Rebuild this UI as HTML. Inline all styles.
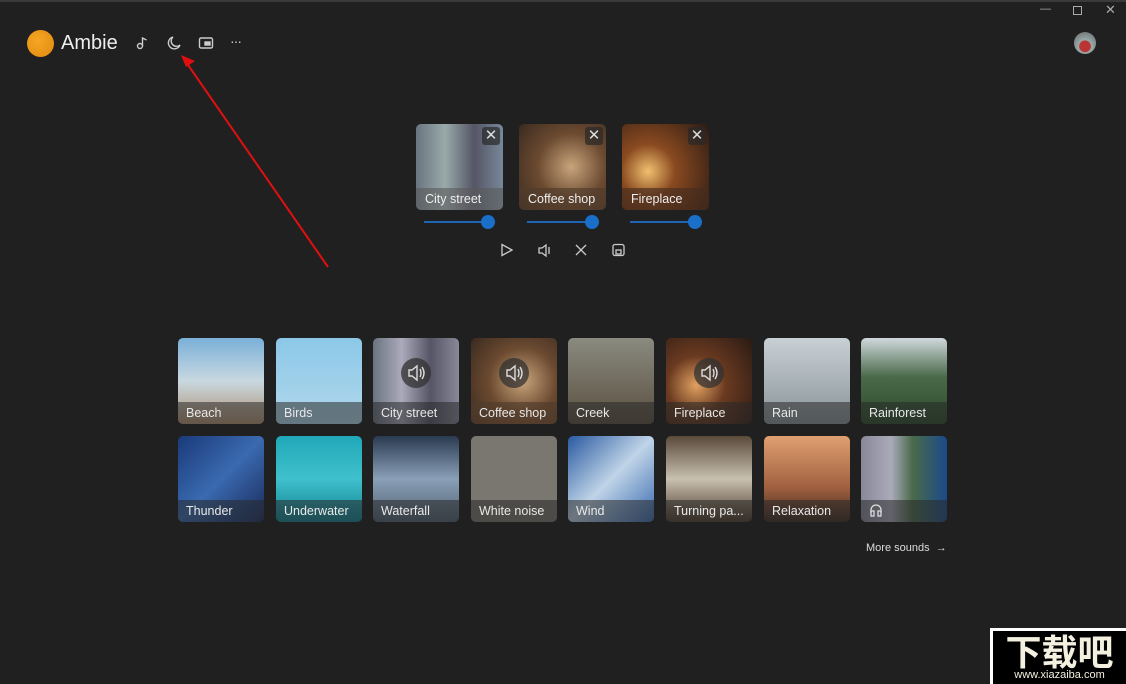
<!DOCTYPE html>
<html><head><meta charset="utf-8"><style>
body{margin:0;width:1126px;height:684px;background:#202020;overflow:hidden;font-family:"Liberation Sans",sans-serif;color:#fff;position:relative}
.a{position:absolute}
.t{position:absolute;width:86px;height:86px;border-radius:5px;overflow:hidden}
.t .l{position:absolute;left:0;right:0;bottom:0;height:22px;background:rgba(40,40,40,.55);font-size:12.5px;line-height:22px;padding-left:8px;color:#e8e8e8;white-space:nowrap}
.sp{position:absolute;left:28px;top:20px;width:30px;height:30px;border-radius:50%;background:rgba(50,50,50,.75)}
.c{position:absolute;top:124px;width:87px;height:86px;border-radius:5px;overflow:hidden}
.c .l{position:absolute;left:0;right:0;bottom:0;height:22px;background:rgba(90,90,90,.6);font-size:12.5px;line-height:22px;padding-left:9px;color:#eee}
.x{position:absolute;right:3px;top:3px;width:18px;height:18px;background:rgba(40,40,40,.7);border-radius:3px;font-size:15px;line-height:18px;text-align:center;color:#ddd}
.s{position:absolute;top:221px;height:2px;background:#1f63b5}
.k{position:absolute;top:215px;width:14px;height:14px;border-radius:50%;background:#1a6fc9}
</style></head><body>
<div class="a" style="left:0;top:0;width:1126px;height:2px;background:#3a3a3a"></div>
<div class="a" style="left:1040px;top:3px;color:#aaa;font-size:11px">—</div>
<div class="a" style="left:1073px;top:6px;width:7px;height:7px;border:1px solid #aaa"></div>
<div class="a" style="left:1105px;top:2px;color:#aaa;font-size:13px">✕</div>
<div class="a" style="left:27px;top:30px;width:27px;height:27px;border-radius:50%;background:radial-gradient(circle at 40% 40%,#f5a623,#e08a10)"></div>
<div class="a" style="left:61px;top:32px;font-size:20px;color:#eee">Ambie</div>
<svg class="a" style="left:134px;top:35px" width="16" height="16" viewBox="0 0 16 16" fill="none" stroke="#ccc" stroke-width="1.4"><circle cx="6" cy="11" r="2.5"/><path d="M8.5 11V3l4 2"/></svg>
<svg class="a" style="left:166px;top:35px" width="16" height="16" viewBox="0 0 16 16" fill="none" stroke="#ccc" stroke-width="1.4"><path d="M7 2a6 6 0 1 0 7 8A5 5 0 0 1 7 2z"/></svg>
<svg class="a" style="left:198px;top:36px" width="16" height="14" viewBox="0 0 16 14" fill="none" stroke="#ccc" stroke-width="1.4"><rect x="1.5" y="2" width="13" height="10" rx="1.5"/><rect x="7" y="6" width="5" height="3" fill="#ccc"/></svg>
<div class="a" style="left:230px;top:33px;color:#ccc;font-size:14px;letter-spacing:-1px">···</div>
<div class="a" style="left:1074px;top:32px;width:22px;height:22px;border-radius:50%;background:radial-gradient(circle at 50% 65%,#b33 30%,#9aa 35%,#666)"></div>
<svg class="a" style="left:0;top:0" width="400" height="300"><line x1="328" y1="267" x2="186" y2="62" stroke="#e01010" stroke-width="2"/><path d="M181 55l14 6-9 6z" fill="#e01010"/></svg>

<div class="c" style="left:416px;background:linear-gradient(90deg,#6a7480,#9aa,#556,#789)"><div class="x">✕</div><div class="l">City street</div></div>
<div class="c" style="left:519px;background:radial-gradient(circle at 60% 50%,#c9a47c,#6b4a30 50%,#3a2a20)"><div class="x">✕</div><div class="l" style="background:rgba(80,60,45,.65)">Coffee shop</div></div>
<div class="c" style="left:622px;background:radial-gradient(circle at 30% 55%,#f0c070,#8a4a20 35%,#2a1a14)"><div class="x">✕</div><div class="l" style="background:rgba(70,45,30,.65)">Fireplace</div></div>
<div class="s" style="left:424px;width:66px"></div><div class="k" style="left:481px"></div>
<div class="s" style="left:527px;width:66px"></div><div class="k" style="left:585px"></div>
<div class="s" style="left:630px;width:66px"></div><div class="k" style="left:688px"></div>
<svg class="a" style="left:500px;top:243px" width="130" height="15" fill="none" stroke="#ccc" stroke-width="1.3"><path d="M2 1.5v11l10-5.5z"/><path d="M39 5h3l4-3v11l-4-3h-3zM49 4v7"/><path d="M76 2l10 10M86 2l-10 10"/><rect x="113" y="1.5" width="11" height="11" rx="2"/><rect x="116" y="7" width="5" height="4"/></svg>

<div class="t" style="left:178px;top:338px;background:linear-gradient(#7ab0d8,#c8d8e0 50%,#b09070)"><div class="l">Beach</div></div>
<div class="t" style="left:276px;top:338px;background:linear-gradient(#8cc8e8,#b0d8ec)"><div class="l">Birds</div></div>
<div class="t" style="left:373px;top:338px;background:linear-gradient(90deg,#6a7480,#aab,#556,#889)"><div class="sp"><svg width="30" height="30" fill="none" stroke="#ddd" stroke-width="1.4"><path d="M8 12h3l5-4v14l-5-4h-3zM19 11q2 4 0 8M21 9q4 6 0 12"/></svg></div><div class="l">City street</div></div>
<div class="t" style="left:471px;top:338px;background:radial-gradient(circle at 60% 50%,#c9a47c,#6b4a30 50%,#3a2a20)"><div class="sp"><svg width="30" height="30" fill="none" stroke="#ddd" stroke-width="1.4"><path d="M8 12h3l5-4v14l-5-4h-3zM19 11q2 4 0 8M21 9q4 6 0 12"/></svg></div><div class="l" style="background:rgba(80,60,45,.65)">Coffee shop</div></div>
<div class="t" style="left:568px;top:338px;background:linear-gradient(#8a8a80,#5a5040)"><div class="l">Creek</div></div>
<div class="t" style="left:666px;top:338px;background:radial-gradient(circle at 35% 55%,#e0a060,#6a3a20 40%,#2a1a14)"><div class="sp"><svg width="30" height="30" fill="none" stroke="#ddd" stroke-width="1.4"><path d="M8 12h3l5-4v14l-5-4h-3zM19 11q2 4 0 8M21 9q4 6 0 12"/></svg></div><div class="l">Fireplace</div></div>
<div class="t" style="left:764px;top:338px;background:linear-gradient(#c8d0d4,#8a9498)"><div class="l">Rain</div></div>
<div class="t" style="left:861px;top:338px;background:linear-gradient(#d0d8dc,#4a6a4a 45%,#2a4a2a)"><div class="l">Rainforest</div></div>
<div class="t" style="left:178px;top:436px;background:linear-gradient(135deg,#1a3a7a,#3a6ab0,#1a2a5a)"><div class="l">Thunder</div></div>
<div class="t" style="left:276px;top:436px;background:linear-gradient(#20a8b8,#40c0cc,#108090)"><div class="l">Underwater</div></div>
<div class="t" style="left:373px;top:436px;background:linear-gradient(#2a3a50,#8aa0b8,#506070)"><div class="l">Waterfall</div></div>
<div class="t" style="left:471px;top:436px;background:#7a7670"><div class="l">White noise</div></div>
<div class="t" style="left:568px;top:436px;background:linear-gradient(135deg,#2a5aa0,#c0d4e8,#3a6ab0)"><div class="l">Wind</div></div>
<div class="t" style="left:666px;top:436px;background:linear-gradient(#5a4a3a,#c8c0b0 50%,#4a3a2a)"><div class="l">Turning pa...</div></div>
<div class="t" style="left:764px;top:436px;background:linear-gradient(#e0a070,#a06040 60%,#3a2a20)"><div class="l">Relaxation</div></div>
<div class="t" style="left:861px;top:436px;background:linear-gradient(90deg,#889,#aab 35%,#4a6a4a 60%,#1a4a8a)"><div class="l"><svg width="14" height="14" fill="none" stroke="#ddd" stroke-width="1.3" style="vertical-align:-2px"><path d="M2 10V7a5 5 0 0 1 10 0v3"/><rect x="2" y="8" width="3" height="5"/><rect x="9" y="8" width="3" height="5"/></svg></div></div>
<div class="a" style="left:866px;top:542px;font-size:11px;color:#ddd">More sounds &nbsp;→</div>
<div class="a" style="left:990px;top:628px;width:136px;height:56px;background:#fff"></div>
<div class="a" style="left:993px;top:631px;width:133px;height:53px;background:#000;color:#f4f0e0;text-align:center">
<div style="font-size:36px;font-weight:bold;line-height:38px;font-family:'Noto Sans CJK SC',sans-serif">下载吧</div>
<div style="font-size:11px;line-height:12px">www.xiazaiba.com</div></div>
</body></html>
